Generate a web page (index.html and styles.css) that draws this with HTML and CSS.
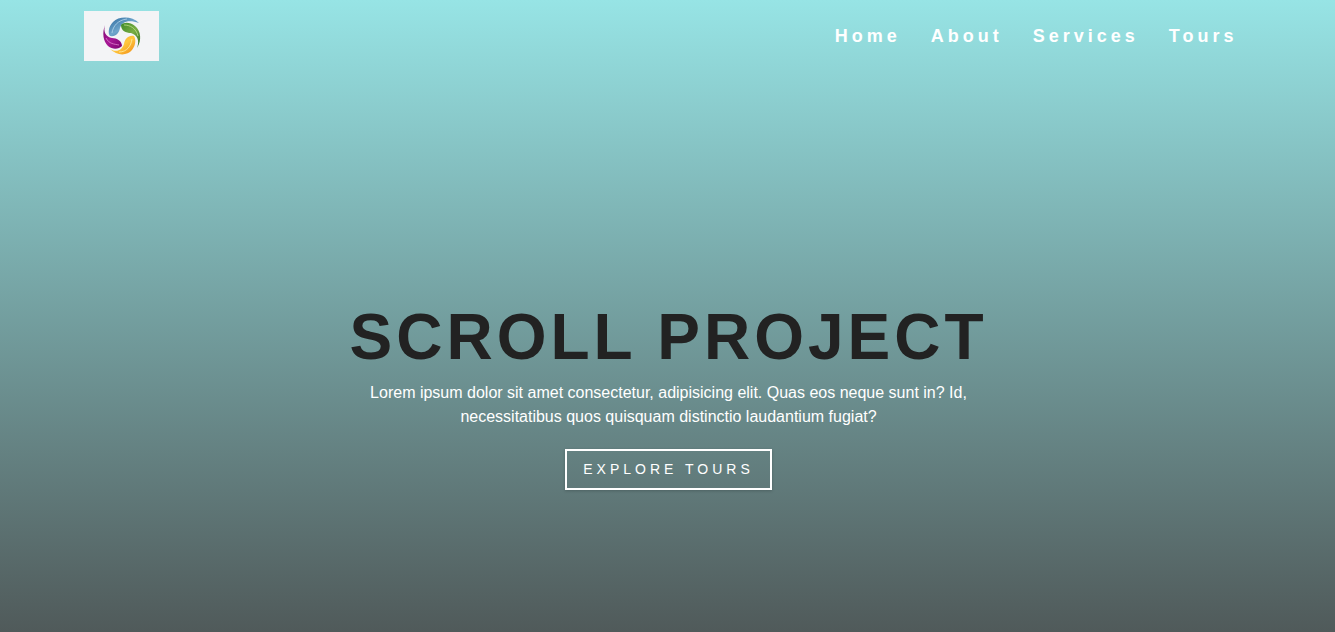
FILE: index.html
```html
<!DOCTYPE html>
<html lang="en">
<head>
<meta charset="utf-8">
<meta name="viewport" content="width=device-width, initial-scale=1">
<title>Scroll Project</title>
<link rel="stylesheet" href="styles.css">
</head>
<body>
<header class="hero" id="home">
  <nav class="nav">
    <div class="nav-center">
      <a class="logo" href="#home" aria-label="Home page">
        <svg class="logo-image" viewBox="0 0 75 50" aria-hidden="true">
          <defs>
            <linearGradient id="blue" x1="0" y1="0" x2="1" y2="1"><stop offset="0" stop-color="#2f6b9e"/><stop offset=".5" stop-color="#6fa6cc"/><stop offset="1" stop-color="#235585"/></linearGradient>
            <linearGradient id="green" x1="0" y1="0" x2="1" y2="1"><stop offset="0" stop-color="#3f8a2c"/><stop offset=".5" stop-color="#78ad42"/><stop offset="1" stop-color="#2e6a24"/></linearGradient>
            <linearGradient id="gold" x1="0" y1="0" x2="1" y2="1"><stop offset="0" stop-color="#f59a1c"/><stop offset=".5" stop-color="#ffc840"/><stop offset="1" stop-color="#f08a12"/></linearGradient>
            <linearGradient id="purple" x1="0" y1="0" x2="1" y2="1"><stop offset="0" stop-color="#7c0872"/><stop offset=".5" stop-color="#a81896"/><stop offset="1" stop-color="#7a0670"/></linearGradient>
          </defs>
          <rect width="75" height="50" fill="#f3f4f6"/>
          <path fill="url(#blue)" d="M55 12C48 5 35 5 29 11C24 16 24 23 26 25C32 26 35 22 36 17C38 11 44 8 55 12Z"/>
          <path fill="none" stroke="#b5d6ea" stroke-width=".8" d="M28 22C29 15 34 9 43 8"/>
          <path fill="url(#green)" d="M53 37C58 29 57 20 51 15C46 11 40 11 37 14C37 20 42 22 47 22C53 24 56 29 53 37Z"/>
          <path fill="none" stroke="#bfe08a" stroke-width=".8" d="M40 14C46 14 52 17 54 25"/>
          <path fill="url(#gold)" d="M26 38C33 45 43 45 48 39C52 34 52 28 50 25C44 24 41 28 40 33C38 39 33 42 26 38Z"/>
          <path fill="none" stroke="#fff0a8" stroke-width=".8" d="M48 28C47 35 43 41 35 41"/>
          <path fill="url(#purple)" d="M21 14C18 22 19 30 24 35C29 39 35 38 38 35C38 30 33 27 28 27C22 26 19 21 21 14Z"/>
          <path fill="none" stroke="#df83cf" stroke-width=".8" d="M22 27C25 33 30 33 35 34"/>
        </svg>
      </a>
      <ul class="links">
        <li><a class="nav-link" href="#home">Home</a></li>
        <li><a class="nav-link" href="#about">About</a></li>
        <li><a class="nav-link" href="#services">Services</a></li>
        <li><a class="nav-link" href="#tours">Tours</a></li>
      </ul>
    </div>
  </nav>
  <div class="banner">
    <h1 class="title">Scroll Project</h1>
    <p class="intro">Lorem ipsum dolor sit amet consectetur, adipisicing elit. Quas eos neque sunt in? Id, necessitatibus quos quisquam distinctio laudantium fugiat?</p>
    <a class="button" href="#tours">Explore Tours</a>
  </div>
</header>
</body>
</html>
```

FILE: styles.css
```css
* {
  box-sizing: border-box;
  margin: 0;
  padding: 0;
}

body {
  font-family: "Liberation Sans", Arial, sans-serif;
  font-size: 16px;
  line-height: 24px;
  color: #fff;
}

a {
  color: inherit;
  text-decoration: none;
}

.hero {
  display: flex;
  flex-direction: column;
  min-height: 100vh;
  background: linear-gradient(#97e4e5, #505a5a);
}

.nav-center {
  display: flex;
  align-items: center;
  justify-content: space-between;
  max-width: 1168px;
  margin: 0 auto;
  padding: 11px 0;
}

.logo-image {
  display: block;
  width: 75px;
  height: 50px;
}

.links {
  display: flex;
  gap: 30px;
  padding-right: 14px;
  list-style: none;
}

.nav-link {
  display: block;
  font-size: 18px;
  font-weight: 700;
  letter-spacing: 4px;
}

.banner {
  flex: 1;
  display: flex;
  flex-direction: column;
  align-items: center;
  justify-content: center;
  padding: 82px 16px 0 18px;
  text-align: center;
}

.title {
  font-size: 64px;
  line-height: 80px;
  letter-spacing: 4px;
  text-transform: uppercase;
  color: #222;
}

.intro {
  max-width: 640px;
  margin: 4px 0 20px;
}

.button {
  padding: 8px 16px;
  border: 2px solid #fff;
  font-size: 14px;
  line-height: 21px;
  letter-spacing: 4px;
  text-transform: uppercase;
  box-shadow: 0 1px 3px rgba(0, 0, 0, 0.2);
}
```
